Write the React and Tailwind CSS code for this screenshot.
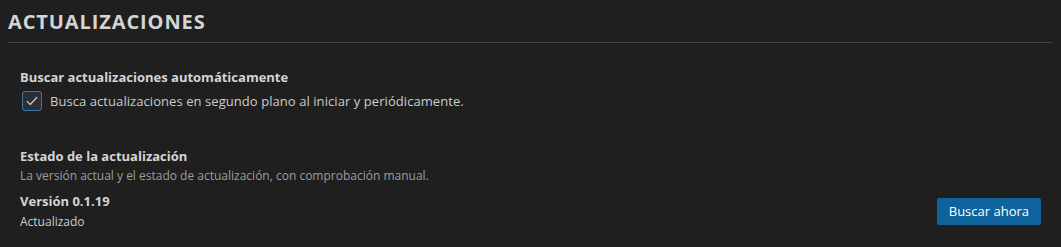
import React from "react";

export default function App() {
  return (
    <div className="w-[1061px] h-[247px] bg-[#1f1f1f] text-[#cccccc] overflow-hidden" style={{ fontFamily: '"Open Sans", "Noto Sans", sans-serif' }}>
      <div className="px-2 pt-[9px]">
        <h2 className="text-[20px] font-bold tracking-[0.045em] text-[#d4d4d4] leading-[26px] pb-[7px] border-b border-[#474747] mr-[1px]">
          ACTUALIZACIONES
        </h2>
        <div className="px-3 pt-[25px]">
          <div className="text-[13px] font-bold leading-[18px] text-[#d4d4d4]">Buscar actualizaciones automáticamente</div>
          <label className="flex items-center gap-2 mt-[5px] ml-[2px]">
            <span className="w-[20px] h-[20px] rounded-[3px] border border-[#3b75a8] bg-[#2b2e33] flex items-center justify-center">
              <svg width="14" height="14" viewBox="0 0 16 16" fill="none">
                <path d="M2.5 8.5 L6 12 L13.5 4" stroke="#c8c8c8" strokeWidth="1.4" strokeLinecap="round" strokeLinejoin="round" />
              </svg>
            </span>
            <span className="text-[13px] leading-[18px] tracking-[0.005em] text-[#cccccc]">Busca actualizaciones en segundo plano al iniciar y periódicamente.</span>
          </label>
          <div className="mt-[36px] text-[13px] font-bold leading-[18px] text-[#d4d4d4]">Estado de la actualización</div>
          <div className="mt-[2px] text-[12px] leading-[17px] text-[#9d9d9d]">La versión actual y el estado de actualización, con comprobación manual.</div>
          <div className="flex items-center justify-between mt-[8px]">
            <div>
              <div className="text-[13px] font-bold leading-[18px] text-[#d4d4d4]">Versión 0.1.19</div>
              <div className="mt-[3px] text-[12px] leading-[17px] text-[#cccccc]">Actualizado</div>
            </div>
            <button className="h-[27px] px-[12px] bg-[#0e639c] rounded-[2px] text-white text-[13px] leading-[18px] mr-0">Buscar ahora</button>
          </div>
        </div>
      </div>
    </div>
  );
}
